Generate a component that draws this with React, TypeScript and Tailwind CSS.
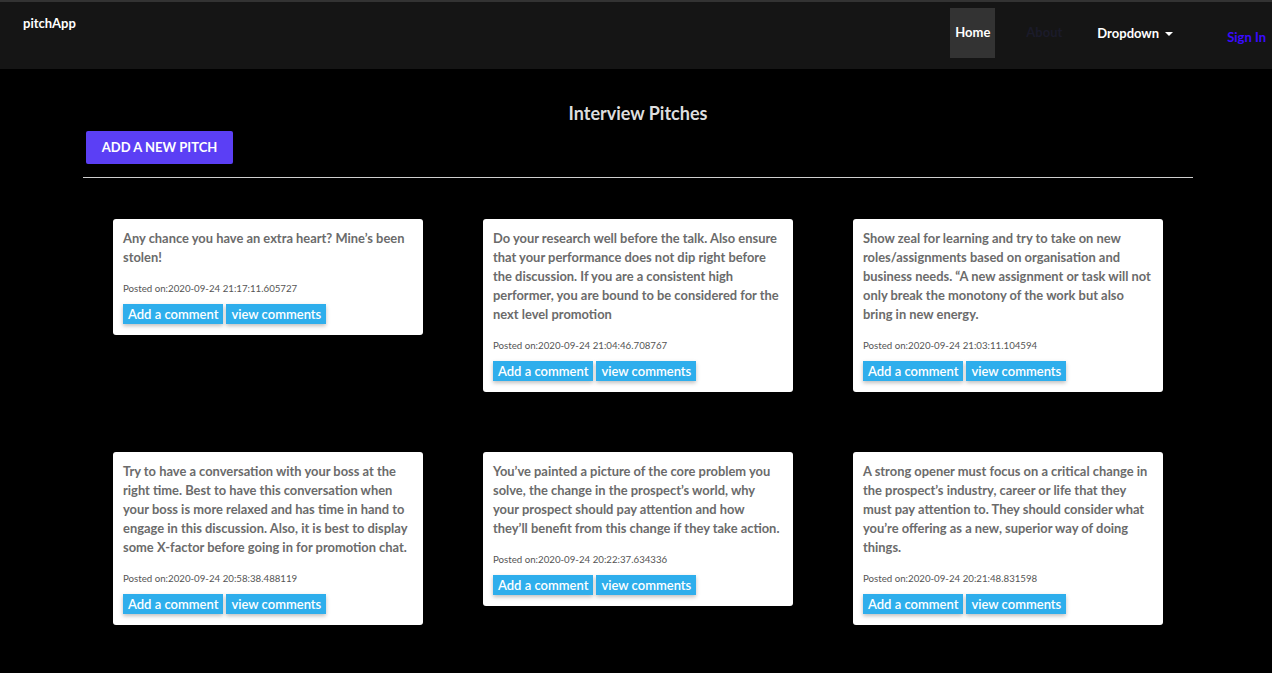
import React from "react";

type Pitch = { text: string; posted: string };

const pitches: Pitch[] = [
  {
    text: "Any chance you have an extra heart? Mine’s been stolen!",
    posted: "2020-09-24 21:17:11.605727",
  },
  {
    text: "Do your research well before the talk. Also ensure that your performance does not dip right before the discussion. If you are a consistent high performer, you are bound to be considered for the next level promotion",
    posted: "2020-09-24 21:04:46.708767",
  },
  {
    text: "Show zeal for learning and try to take on new roles/assignments based on organisation and business needs. “A new assignment or task will not only break the monotony of the work but also bring in new energy.",
    posted: "2020-09-24 21:03:11.104594",
  },
  {
    text: "Try to have a conversation with your boss at the right time. Best to have this conversation when your boss is more relaxed and has time in hand to engage in this discussion. Also, it is best to display some X-factor before going in for promotion chat.",
    posted: "2020-09-24 20:58:38.488119",
  },
  {
    text: "You’ve painted a picture of the core problem you solve, the change in the prospect’s world, why your prospect should pay attention and how they’ll benefit from this change if they take action.",
    posted: "2020-09-24 20:22:37.634336",
  },
  {
    text: "A strong opener must focus on a critical change in the prospect’s industry, career or life that they must pay attention to. They should consider what you’re offering as a new, superior way of doing things.",
    posted: "2020-09-24 20:21:48.831598",
  },
];

const PitchCard: React.FC<{ pitch: Pitch }> = ({ pitch }) => (
  <div className="bg-white rounded-[3px] pl-[10px] pr-[11px] pt-[10px] pb-[11px]">
    <p className="text-[12.9px] font-bold leading-[19px] text-[#6b6b6b]">{pitch.text}</p>
    <p className="mt-[15px] text-[9.7px] leading-[12px] text-[#555]">Posted on:{pitch.posted}</p>
    <div className="mt-[10px] flex gap-[3px]">
      <button className="bg-[#2eaeec] text-white text-[13px] font-semibold leading-[20px] px-[5px] shadow-[0_2px_4px_rgba(0,0,0,0.25)]">
        Add a comment
      </button>
      <button className="bg-[#2eaeec] text-white text-[13px] font-semibold leading-[20px] px-[5px] shadow-[0_2px_4px_rgba(0,0,0,0.25)]">
        view comments
      </button>
    </div>
  </div>
);

export default function App() {
  return (
    <div className="min-h-screen bg-black font-['Lato','Noto_Sans',sans-serif]">
      {/* Navbar */}
      <nav className="h-[69px] bg-[#151515] border-t-2 border-[#333] flex items-start">
        <div className="pl-[23px] pt-[12px] text-white text-[13px] font-bold">pitchApp</div>
        <div className="ml-auto flex items-start pt-[6px]">
          <a className="h-[50px] w-[45px] bg-[#333] flex items-center justify-center text-white text-[13px] font-bold">
            Home
          </a>
          <a className="ml-[31px] h-[50px] flex items-center text-[13px] font-bold text-[#1b1b2a]">About</a>
          <a className="ml-[35px] h-[50px] pt-[2px] flex items-center text-[13px] font-bold text-white">
            Dropdown
            <span className="ml-[6px] inline-block w-0 h-0 border-l-[4px] border-r-[4px] border-t-[4px] border-l-transparent border-r-transparent border-t-white" />
          </a>
          <a className="ml-[54px] mr-[6px] pt-[20px] text-[13px] font-bold text-[#3a0bff]">Sign In</a>
        </div>
      </nav>

      {/* Main */}
      <main className="w-[1110px] ml-[83px] pb-[50px]">
        <h1 className="pt-[33px] text-center text-[18px] font-bold leading-[22px] text-[#dedede]">
          Interview Pitches
        </h1>
        <button className="ml-[3px] mt-[7px] w-[147px] h-[33px] bg-[#5b3ff5] rounded-[2px] text-white text-[13px] font-bold uppercase">
          Add a new pitch
        </button>
        <hr className="mt-[13px] border-0 h-px bg-[#cfcfcf]" />
        <div className="mt-[41px] px-[30px] grid grid-cols-3 gap-x-[60px] gap-y-[60px] items-start">
          {pitches.map((p, i) => (
            <PitchCard key={i} pitch={p} />
          ))}
        </div>
      </main>
    </div>
  );
}
